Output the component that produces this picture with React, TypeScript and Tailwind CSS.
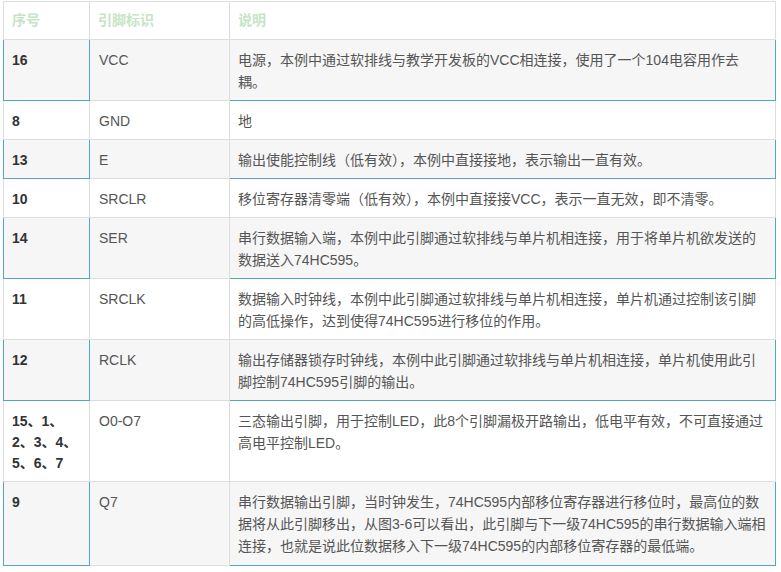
const rows: { no: string[]; pin: string; desc: string[] }[] = [
  { no: ['16'], pin: 'VCC', desc: ['电源，本例中通过软排线与教学开发板的VCC相连接，使用了一个104电容用作去', '耦。'] },
  { no: ['8'], pin: 'GND', desc: ['地'] },
  { no: ['13'], pin: 'E', desc: ['输出使能控制线（低有效），本例中直接接地，表示输出一直有效。'] },
  { no: ['10'], pin: 'SRCLR', desc: ['移位寄存器清零端（低有效），本例中直接接VCC，表示一直无效，即不清零。'] },
  { no: ['14'], pin: 'SER', desc: ['串行数据输入端，本例中此引脚通过软排线与单片机相连接，用于将单片机欲发送的', '数据送入74HC595。'] },
  { no: ['11'], pin: 'SRCLK', desc: ['数据输入时钟线，本例中此引脚通过软排线与单片机相连接，单片机通过控制该引脚', '的高低操作，达到使得74HC595进行移位的作用。'] },
  { no: ['12'], pin: 'RCLK', desc: ['输出存储器锁存时钟线，本例中此引脚通过软排线与单片机相连接，单片机使用此引', '脚控制74HC595引脚的输出。'] },
  { no: ['15、1、', '2、3、4、', '5、6、7'], pin: 'O0-O7', desc: ['三态输出引脚，用于控制LED，此8个引脚漏极开路输出，低电平有效，不可直接通过', '高电平控制LED。'] },
  {
    no: ['9'],
    pin: 'Q7',
    desc: [
      '串行数据输出引脚，当时钟发生，74HC595内部移位寄存器进行移位时，最高位的数',
      '据将从此引脚移出，从图3-6可以看出，此引脚与下一级74HC595的串行数据输入端相',
      '连接，也就是说此位数据移入下一级74HC595的内部移位寄存器的最低端。',
    ],
  },
];

const blue = 'border-l-[#4ea8c6] border-r-[#4ea8c6] border-b-[#4ea8c6]';

export default function App() {
  return (
    <div
      className="pl-[3px] pt-[1px] bg-white w-[781px] h-[572px] overflow-hidden"
      style={{ fontFamily: '"Liberation Sans", "Noto Sans CJK SC", sans-serif' }}
    >
      <table className="w-[773px] border-collapse table-fixed text-[14px] leading-[22px] text-[#555]">
        <colgroup>
          <col className="w-[86px]" />
          <col className="w-[140px]" />
          <col />
        </colgroup>
        <thead>
          <tr className="text-[#c6e4c6] font-bold text-left">
            <th className="border border-[#ddd] pl-[8px] pt-[7px] pb-[8px] align-top">
              <div className="h-[22px]">序号</div>
            </th>
            <th className="border border-[#ddd] pl-[8px] pt-[7px] pb-[8px] align-top">
              <div className="h-[22px]">引脚标识</div>
            </th>
            <th className="border border-[#ddd] pl-[8px] pt-[7px] pb-[8px] align-top">
              <div className="h-[22px]">说明</div>
            </th>
          </tr>
        </thead>
        <tbody>
          {rows.map((r, i) => {
            const striped = i % 2 === 0;
            const tall = r.desc.length > 2 || r.no.length > 2;
            return (
              <tr key={r.pin} className={striped ? 'bg-[#f6f6f6]' : 'bg-white'}>
                <td
                  className={
                    striped
                      ? `border border-[#ddd] ${blue} pl-[8px] pr-[4px] pt-[9px] pb-[7px] align-top font-bold text-[#333]`
                      : 'border border-[#ddd] pl-[8px] pr-[4px] pt-[9px] pb-[7px] align-top font-bold text-[#333]'
                  }
                >
                  {r.no.map((n, k) => (
                    <div key={n} className={r.no.length > 1 && k < r.no.length - 1 ? 'h-[21px]' : 'h-[22px]'}>
                      {n}
                    </div>
                  ))}
                </td>
                <td className="border border-[#ddd] pl-[9px] pt-[9px] pb-[7px] align-top">
                  <div className="h-[22px]">{r.pin}</div>
                </td>
                <td
                  className={
                    (striped
                      ? 'border border-[#ddd] border-r-[#4ea8c6] border-b-[#4ea8c6] pl-[8px] pr-[2px] pt-[9px] align-top'
                      : 'border border-[#ddd] pl-[8px] pr-[2px] pt-[9px] align-top') + (tall ? ' pb-[8px]' : ' pb-[7px]')
                  }
                >
                  {r.desc.map((d) => (
                    <div key={d} className="h-[22px] whitespace-nowrap">
                      {d}
                    </div>
                  ))}
                </td>
              </tr>
            );
          })}
        </tbody>
      </table>
    </div>
  );
}
